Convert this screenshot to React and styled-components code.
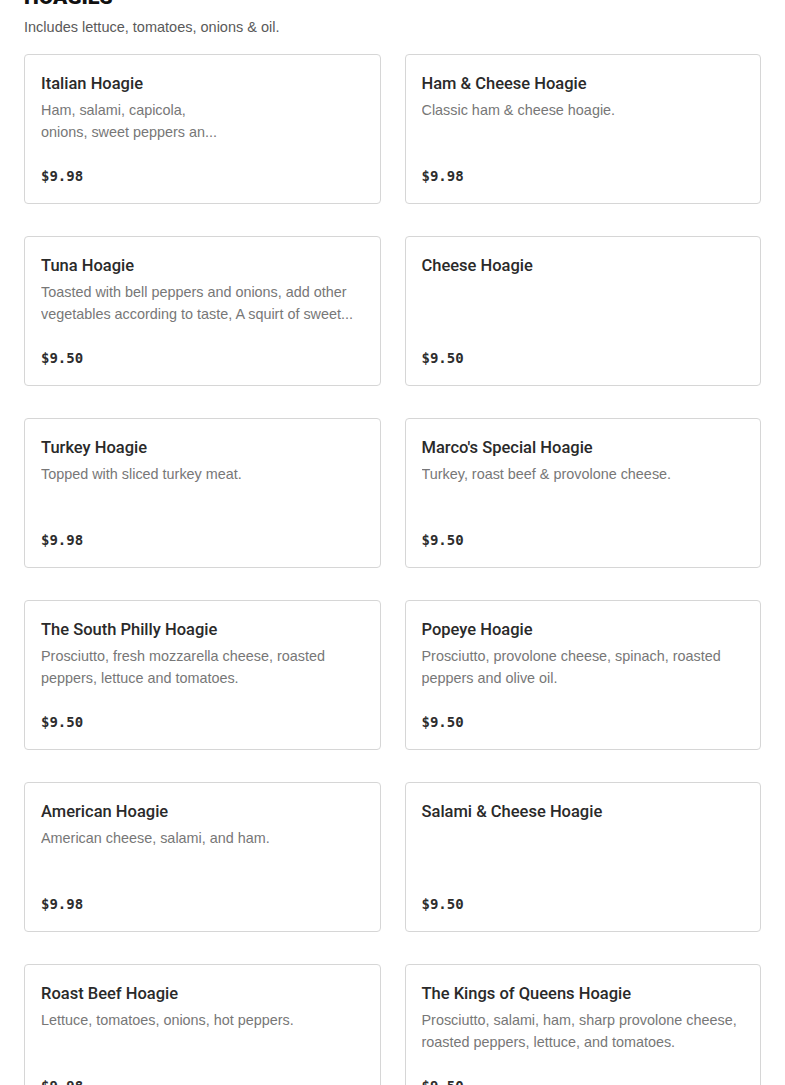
import React from "react";
import styled, { createGlobalStyle } from "styled-components";

const Global = createGlobalStyle`
  html, body { margin: 0; padding: 0; background: #fff; }
  body { font-family: "Liberation Sans", Arial, sans-serif; color: #2d2d2d; }
  * { box-sizing: border-box; }
`;

const Section = styled.section`
  padding: 0 24px 40px;
`;

const Heading = styled.h2`
  margin: -17px 0 0;
  font-family: Roboto, "Liberation Sans", sans-serif;
  font-size: 21px;
  line-height: 28px;
  font-weight: 900;
  text-transform: uppercase;
  color: #111;
`;

const Subtitle = styled.p`
  margin: 7px 0 0;
  font-size: 14.5px;
  line-height: 18px;
  color: #5a5a5a;
`;

const Grid = styled.div`
  display: grid;
  grid-template-columns: 1fr 1fr;
  column-gap: 24px;
  row-gap: 32px;
  margin-top: 18px;
`;

const Card = styled.article`
  height: 150px;
  border: 1px solid #d6d6d6;
  border-radius: 4px;
  padding: 17px 16px 17px;
  display: flex;
  flex-direction: column;
  background: #fff;
`;

const Title = styled.h3`
  margin: 0;
  font-family: Roboto, "Liberation Sans", sans-serif;
  font-size: 16.5px;
  line-height: 24px;
  font-weight: 500;
  color: #2a2a2a;
`;

const Desc = styled.p`
  margin: 3px 0 0;
  font-size: 14.4px;
  line-height: 22px;
  color: #777;
  display: -webkit-box;
  -webkit-line-clamp: 2;
  -webkit-box-orient: vertical;
  overflow: hidden;
`;

const Price = styled.div`
  margin-top: auto;
  font-family: "DejaVu Sans Mono", "Liberation Mono", monospace;
  font-weight: 700;
  font-size: 14px;
  line-height: 20px;
  color: #2d2d2d;
`;

const items = [
  { name: "Italian Hoagie", desc: ["Ham, salami, capicola,", "onions, sweet peppers an..."], price: "$9.98" },
  { name: "Ham & Cheese Hoagie", desc: ["Classic ham & cheese hoagie."], price: "$9.98" },
  { name: "Tuna Hoagie", desc: ["Toasted with bell peppers and onions, add other vegetables according to taste, A squirt of sweet..."], price: "$9.50" },
  { name: "Cheese Hoagie", desc: [], price: "$9.50" },
  { name: "Turkey Hoagie", desc: ["Topped with sliced turkey meat."], price: "$9.98" },
  { name: "Marco's Special Hoagie", desc: ["Turkey, roast beef & provolone cheese."], price: "$9.50" },
  { name: "The South Philly Hoagie", desc: ["Prosciutto, fresh mozzarella cheese, roasted peppers, lettuce and tomatoes."], price: "$9.50" },
  { name: "Popeye Hoagie", desc: ["Prosciutto, provolone cheese, spinach, roasted peppers and olive oil."], price: "$9.50" },
  { name: "American Hoagie", desc: ["American cheese, salami, and ham."], price: "$9.98" },
  { name: "Salami & Cheese Hoagie", desc: [], price: "$9.50" },
  { name: "Roast Beef Hoagie", desc: ["Lettuce, tomatoes, onions, hot peppers."], price: "$9.98" },
  { name: "The Kings of Queens Hoagie", desc: ["Prosciutto, salami, ham, sharp provolone cheese, roasted peppers, lettuce, and tomatoes."], price: "$9.50" },
];

export default function App() {
  return (
    <>
      <Global />
      <Section>
        <Heading>Hoagies</Heading>
        <Subtitle>Includes lettuce, tomatoes, onions &amp; oil.</Subtitle>
        <Grid>
          {items.map((it) => (
            <Card key={it.name}>
              <Title>{it.name}</Title>
              {it.desc.length > 0 && (
                <Desc>
                  {it.desc.map((line, i) => (
                    <React.Fragment key={i}>
                      {i > 0 && <br />}
                      {line}
                    </React.Fragment>
                  ))}
                </Desc>
              )}
              <Price>{it.price}</Price>
            </Card>
          ))}
        </Grid>
      </Section>
    </>
  );
}
